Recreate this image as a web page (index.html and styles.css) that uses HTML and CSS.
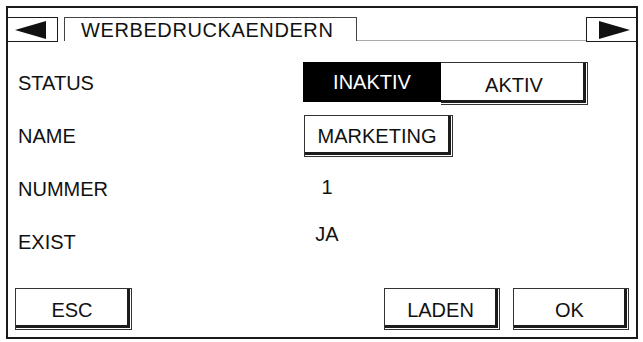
FILE: index.html
```html
<!DOCTYPE html>
<html>
<head>
<meta charset="utf-8">
<link rel="stylesheet" href="styles.css">
</head>
<body>
<div class="frame">
  <div class="header">
    <div class="arrow-box left-box">
      <svg width="32" height="18" viewBox="0 0 32 18"><polygon points="0,9 31,0 31,18" fill="#111"/></svg>
    </div>
    <div class="tab">WERBEDRUCKAENDERN</div>
    <div class="header-fill"></div>
    <div class="arrow-box right-box">
      <svg width="32" height="18" viewBox="0 0 32 18"><polygon points="32,9 1,0 1,18" fill="#111"/></svg>
    </div>
  </div>
  <div class="rows">
    <div class="row">
      <div class="label">STATUS</div>
      <div class="value status">
        <div class="seg active">INAKTIV</div>
        <div class="btn seg-btn">AKTIV</div>
      </div>
    </div>
    <div class="row">
      <div class="label">NAME</div>
      <div class="value"><div class="btn name-btn">MARKETING</div></div>
    </div>
    <div class="row">
      <div class="label">NUMMER</div>
      <div class="value"><div class="plain num">1</div></div>
    </div>
    <div class="row">
      <div class="label">EXIST</div>
      <div class="value"><div class="plain exist">JA</div></div>
    </div>
  </div>
  <div class="footer">
    <div class="btn foot-btn">ESC</div>
    <div class="foot-right">
      <div class="btn foot-btn">LADEN</div>
      <div class="btn foot-btn">OK</div>
    </div>
  </div>
</div>
</body>
</html>
```

FILE: styles.css
```css
html, body {
  margin: 0;
  padding: 0;
  background: #fff;
}
body {
  font-family: "Liberation Sans", Arial, sans-serif;
  color: #111;
  font-size: 20px;
}
.frame {
  margin: 6px 0 0 6px;
  width: 628px;
  height: 329px;
  border: 2px solid #1a1a1a;
  display: flex;
  flex-direction: column;
}
.header {
  display: flex;
  align-items: flex-end;
  padding-top: 9px;
  height: 25px;
}
.arrow-box {
  height: 23px;
  border: 1px solid #1a1a1a;
  display: flex;
  align-items: center;
  box-sizing: content-box;
}
.left-box {
  border-left: none;
  justify-content: flex-start;
  padding-left: 7px;
  width: 42px;
}
.right-box {
  border-right: none;
  justify-content: flex-end;
  padding-right: 6px;
  width: 43px;
}
.tab {
  margin-left: 6px;
  width: 275px;
  height: 23px;
  border: 1px solid #444;
  border-bottom: none;
  padding-left: 16px;
  font-size: 20px;
  letter-spacing: 0.6px;
  line-height: 24px;
  position: relative;
  top: -1px;
}
.header-fill {
  flex: 1;
  border-bottom: 1px solid #aaa;
  height: 0;
  position: relative;
  top: -1px;
}
.rows {
  padding-top: 15px;
  display: flex;
  flex-direction: column;
}
.row {
  display: flex;
  height: 53px;
}
.label {
  width: 285px;
  padding-left: 10px;
  line-height: 53px;
}
.value {
  padding-top: 5px;
}
.status {
  display: flex;
  align-items: flex-start;
}
.seg {
  width: 138px;
  height: 40px;
  background: #000;
  color: #fff;
  text-align: center;
  line-height: 40px;
  box-sizing: border-box;
}
.btn {
  box-sizing: border-box;
  border: 1px solid #333;
  background: #fff;
  text-align: center;
  box-shadow: inset -1px -1px 0 #fff, inset -4px -4px 0 #1c1c1c;
}
.seg-btn {
  width: 147px;
  height: 43px;
  border-left: none;
  line-height: 45px;
}
.name-btn {
  margin-left: 1px;
  width: 149px;
  height: 42px;
  line-height: 40px;
  padding-right: 3px;
}
.plain {
  width: 48px;
  text-align: center;
}
.num {
  line-height: 53px;
  margin-top: -7px;
}
.exist {
  line-height: 53px;
  margin-top: -13px;
}
.footer {
  margin-top: auto;
  display: flex;
  justify-content: space-between;
  padding: 0 7px 7px 7px;
}
.foot-right {
  display: flex;
  gap: 13px;
}
.foot-btn {
  width: 117px;
  height: 42px;
  line-height: 42px;
  padding-right: 3px;
}
.foot-right .foot-btn {
  width: 116px;
}
```
